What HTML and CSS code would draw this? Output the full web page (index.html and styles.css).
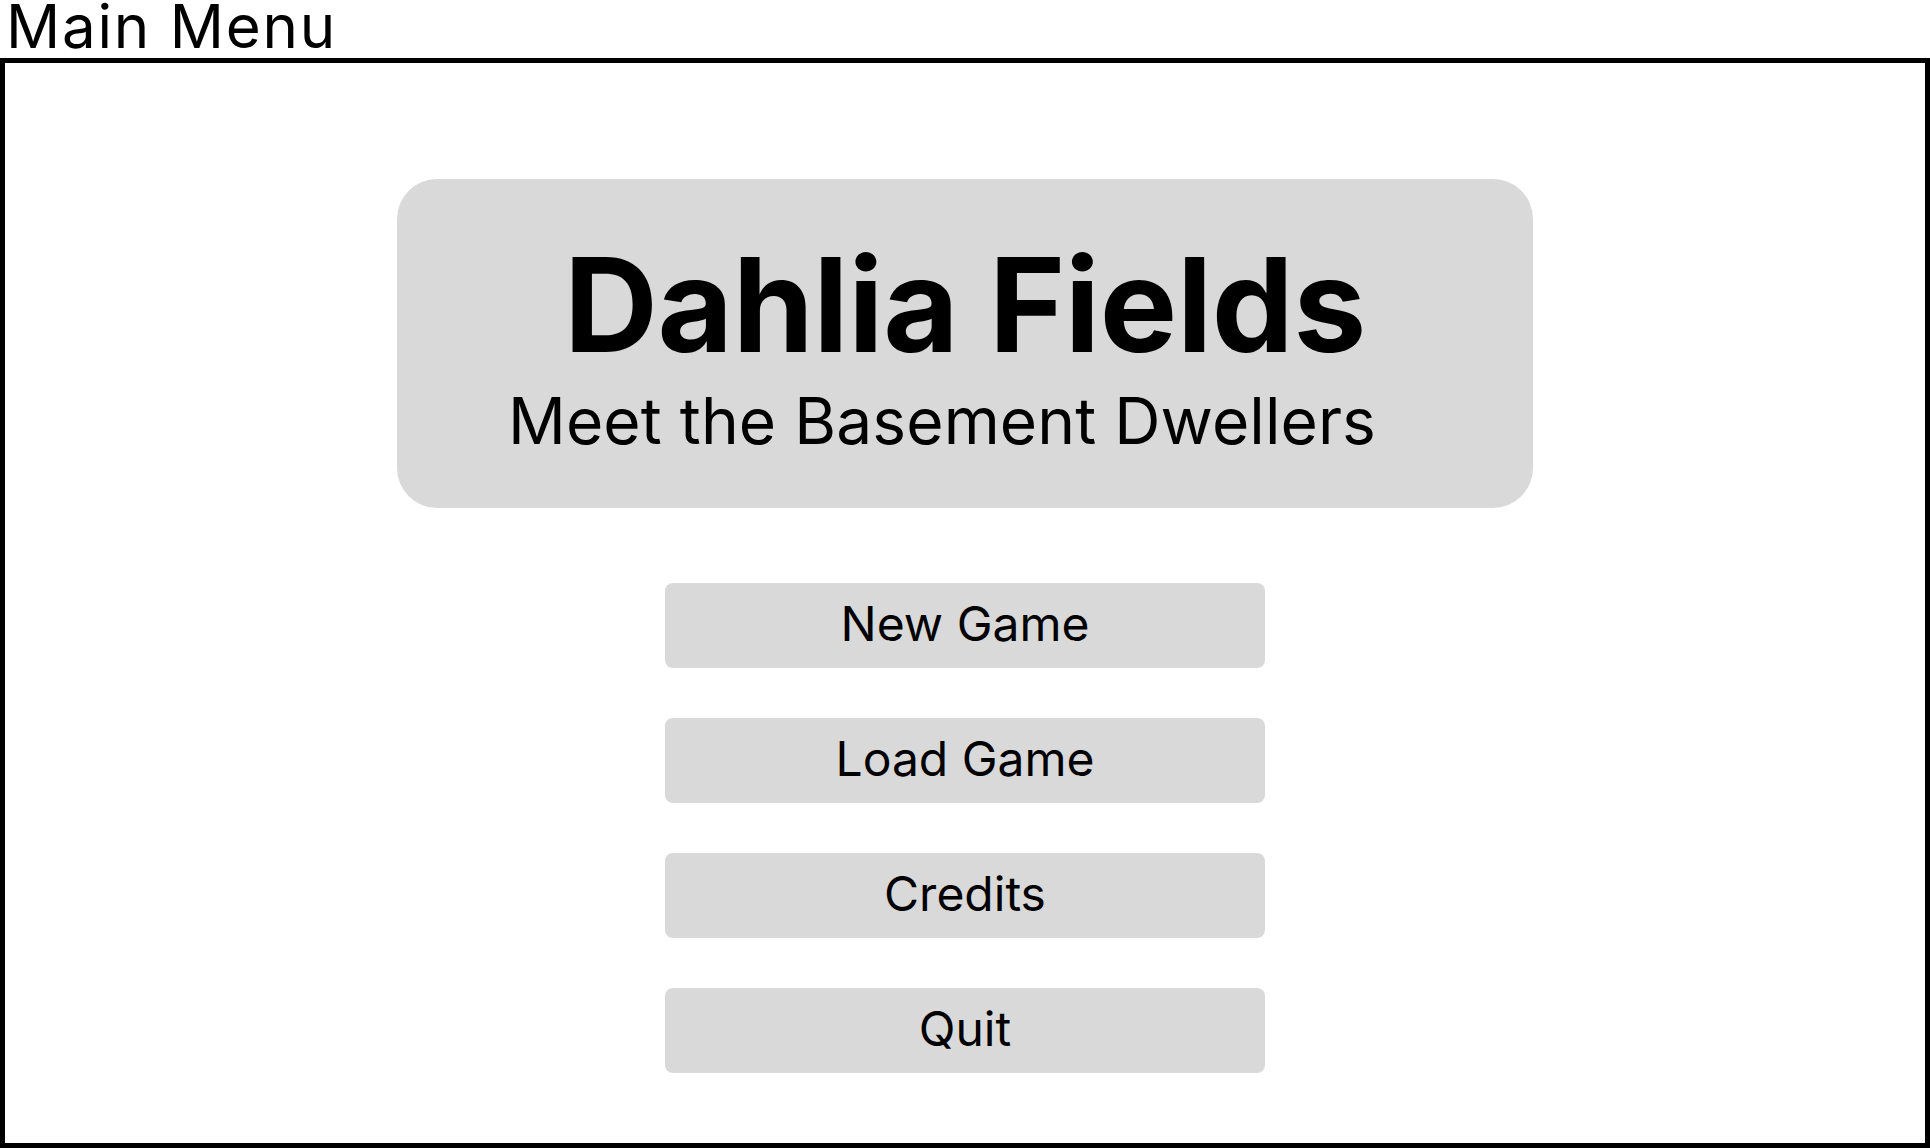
FILE: index.html
```html
<!DOCTYPE html>
<html lang="en">
<head>
<meta charset="utf-8">
<title>Main Menu</title>
<link rel="stylesheet" href="styles.css">
</head>
<body>
  <div class="label">Main Menu</div>
  <main class="frame">
    <section class="hero">
      <h1 class="title">Dahlia Fields</h1>
      <p class="subtitle">Meet the Basement Dwellers</p>
    </section>
    <nav class="menu">
      <button class="menu-btn">New Game</button>
      <button class="menu-btn">Load Game</button>
      <button class="menu-btn">Credits</button>
      <button class="menu-btn">Quit</button>
    </nav>
  </main>
</body>
</html>
```
FILE: styles.css
```css
html, body {
  margin: 0;
  padding: 0;
  background: #ffffff;
}
body {
  font-family: Inter, "Noto Sans", sans-serif;
  color: #000;
  width: 1930px;
  height: 1148px;
  overflow: hidden;
}
.label {
  height: 58px;
  font-size: 60px;
  line-height: 52px;
  letter-spacing: 1.8px;
  padding-left: 6px;
  white-space: nowrap;
  overflow: visible;
}
.frame {
  box-sizing: border-box;
  height: 1090px;
  border: 5px solid #000;
  display: flex;
  flex-direction: column;
  align-items: center;
}
.hero {
  box-sizing: border-box;
  margin-top: 116px;
  width: 1136px;
  height: 329px;
  background: #d9d9d9;
  border-radius: 40px;
  padding-top: 61px;
  display: flex;
  flex-direction: column;
  align-items: center;
}
.title {
  margin: 0;
  font-size: 130px;
  line-height: 130px;
  font-weight: 700;
  letter-spacing: -0.3px;
}
.subtitle {
  margin: 19px 46px 0 0;
  font-size: 64px;
  line-height: 64px;
  font-weight: 400;
  letter-spacing: 0.1px;
}
.menu {
  margin-top: 75px;
  display: flex;
  flex-direction: column;
  gap: 50px;
}
.menu-btn {
  box-sizing: border-box;
  width: 600px;
  height: 85px;
  border: none;
  border-radius: 8px;
  background: #d9d9d9;
  font-family: Inter, "Noto Sans", sans-serif;
  font-size: 48px;
  line-height: 80px;
  padding: 0 0 4px 0;
  color: #000;
}
```
